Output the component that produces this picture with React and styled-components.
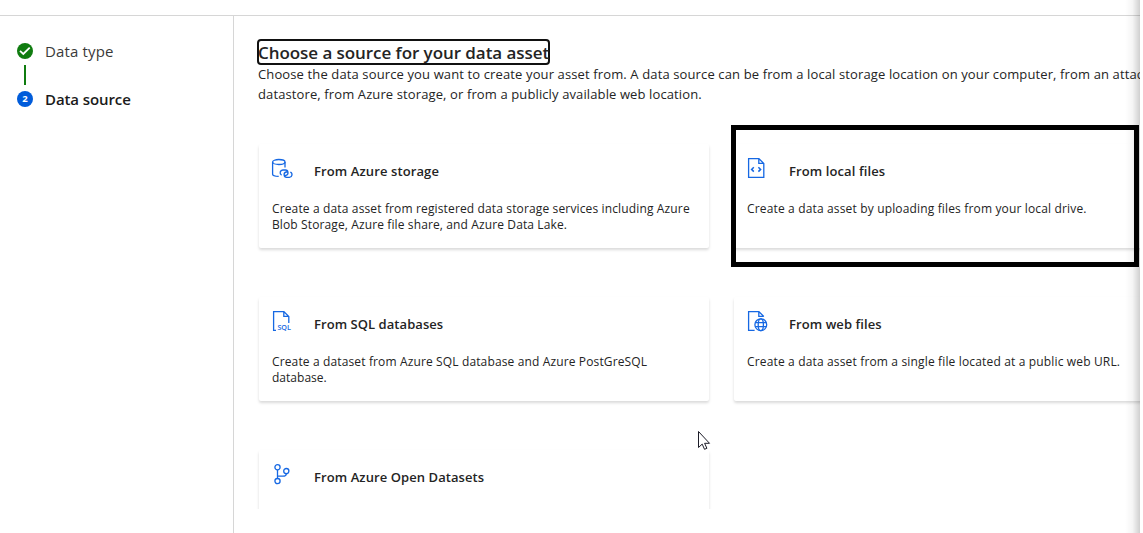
import React from 'react';
import styled, { createGlobalStyle } from 'styled-components';

const Global = createGlobalStyle`
  * { box-sizing: border-box; }
  body { margin: 0; background: #fff; overflow: hidden; }
`;

const Page = styled.div`
  position: relative;
  display: flex;
  flex-direction: column;
  width: 1143px;
  height: 533px;
  padding-right: 3px;
  overflow: hidden;
  background: #fff;
  color: #242424;
  font-family: 'Open Sans', 'Noto Sans', sans-serif;
`;

const TopBar = styled.header`
  flex: none;
  height: 16px;
  border-bottom: 1px solid #d6d6d6;
`;

const Body = styled.div`
  flex: 1;
  display: flex;
  min-height: 0;
`;

const Sidebar = styled.nav`
  flex: none;
  width: 234px;
  padding: 24px 0 0 17px;
  border-right: 1px solid #d6d6d6;
`;

const Step = styled.div`
  display: flex;
  align-items: center;
  gap: 12px;
  height: 22px;
`;

const StepBadge = styled.span`
  display: flex;
  align-items: center;
  justify-content: center;
  width: 16px;
  height: 16px;
  border-radius: 50%;
  background: ${(p) => (p.$done ? '#107c10' : '#015cda')};
  color: #fff;
  font-size: 9.5px;
  font-weight: 700;
  line-height: 16px;
`;

const Connector = styled.div`
  width: 2px;
  height: 20px;
  margin: 3px 0 3px 7px;
  background: #107c10;
`;

const Line = styled.span`
  display: block;
  white-space: nowrap;
  letter-spacing: ${(p) => p.$track || 0}px;
`;

const StepLabel = styled(Line)`
  font-size: 15px;
  line-height: 22px;
  font-weight: ${(p) => (p.$active ? 600 : 400)};
  color: ${(p) => (p.$active ? '#1b1b1b' : '#3a3a3a')};
`;

const Main = styled.main`
  flex: 1;
  min-width: 0;
  height: 493px;
  padding: 23px 0 0 23px;
  overflow: hidden;
`;

const Title = styled.h1`
  width: 293px;
  height: 26px;
  margin: 0;
  padding: 0;
  border: 2px solid #111;
  border-radius: 4px;
  font-size: 17px;
  font-weight: 600;
  line-height: 23px;
  text-indent: -1px;
`;

const Intro = styled.div`
  padding-left: 1px;
  margin-top: -1px;
  font-size: 13px;
  line-height: 20px;
`;

const Grid = styled.div`
  display: grid;
  grid-template-columns: 450px 450px;
  grid-auto-rows: 104px;
  gap: 49px 25px;
  padding: 40px 0 0 2px;
`;

const Card = styled.section`
  padding: 14px 13px;
  background: #fff;
  border-radius: 2px;
  box-shadow: 0 2px 3px rgba(0, 0, 0, 0.15);
`;

const CardHead = styled.div`
  display: flex;
  gap: 20px;
  height: 43px;
`;

const CardIcon = styled.svg`
  flex: none;
  width: 22px;
  height: 22px;
  overflow: visible;
  fill: none;
  stroke: #1668e3;
  stroke-width: 1.3;
`;

const CardTitle = styled(Line)`
  font-size: 13px;
  font-weight: 600;
  line-height: 26px;
`;

const CardText = styled.div`
  font-size: 12px;
  line-height: 16px;
`;

const EdgeShadow = styled.div`
  position: absolute;
  top: 0;
  right: 3px;
  width: 15px;
  height: 533px;
  background: linear-gradient(to right, rgba(0, 0, 0, 0), rgba(0, 0, 0, 0.04) 50%, rgba(0, 0, 0, 0.19));
`;

const Highlight = styled.div`
  position: absolute;
  left: 731px;
  top: 125px;
  width: 408px;
  height: 142px;
  border: 5px solid #000;
`;

const Cursor = styled.svg`
  position: absolute;
  left: 698px;
  top: 430px;
`;

const StorageIcon = () => (
  <CardIcon viewBox="0 0 22 22">
    <ellipse cx="6.8" cy="4" rx="6.2" ry="2.5" />
    <path d="M.6 4v12.2c0 1.2 2.4 2.1 6.1 2.2M13 4v5.6" />
    <path d="M9.6 17.1a2.7 2.7 0 0 1 1.3-5.1h2.6a2.7 2.7 0 0 1 .5 5.3h-1.2M18.3 14.1a2.7 2.7 0 0 1-.9 5.2h-2.8a2.7 2.7 0 0 1-.5-5.3h1.2" />
  </CardIcon>
);

const CodeFileIcon = () => (
  <CardIcon viewBox="0 0 22 22">
    <path d="M1.6.6h10.3l4.9 4.9v13.9H1.6zM11.8.6v4.8h4.8" />
    <path d="M6.8 9.2 4.6 11.4l2.2 2.2M11.4 9.2l2.2 2.2-2.2 2.2" strokeWidth="1.5" />
  </CardIcon>
);

const SqlFileIcon = () => (
  <CardIcon viewBox="0 0 22 22">
    <path d="M4 19.3H1.6V.6h10.3l4.9 4.9v6.6M11.8.6v4.8h4.8" />
    <text x="5.4" y="19.4" fontSize="7.2" fontWeight="600" fill="#1668e3" stroke="none" textLength="13.4">SQL</text>
  </CardIcon>
);

const WebFileIcon = () => (
  <CardIcon viewBox="0 0 22 22">
    <path d="M7.6 19.3h-6V.6h10.3l4.9 4.9M11.8.6v4.8h5" />
    <circle cx="13.8" cy="13.7" r="5.9" />
    <ellipse cx="13.8" cy="13.7" rx="2.6" ry="5.9" />
    <path d="M8.3 11.6h11M8.3 15.6h11" />
  </CardIcon>
);

const BranchIcon = () => (
  <CardIcon viewBox="0 0 22 22">
    <circle cx="5.5" cy="3.3" r="2.6" />
    <circle cx="14.3" cy="7.1" r="2.6" />
    <circle cx="5.5" cy="17.1" r="2.6" />
    <path d="M5.5 5.9v8.6M5.5 12.2h5.4c2.3 0 3.4-.7 3.4-2.5" />
  </CardIcon>
);

const sources = [
  { title: ['From Azure storage', 0.11], Icon: StorageIcon, text: [
    ['Create a data asset from registered data storage services including Azure', 0.14],
    ['Blob Storage, Azure file share, and Azure Data Lake.', 0.12]] },
  { title: ['From local files', 0.1], Icon: CodeFileIcon, text: [
    ['Create a data asset by uploading files from your local drive.', 0.155]] },
  { title: ['From SQL databases', 0.06], Icon: SqlFileIcon, text: [
    ['Create a dataset from Azure SQL database and Azure PostGreSQL', 0.135],
    ['database.', 0.02]] },
  { title: ['From web files', 0.08], Icon: WebFileIcon, text: [
    ['Create a data asset from a single file located at a public web URL.', 0.155]] },
  { title: ['From Azure Open Datasets', 0.08], Icon: BranchIcon, text: [] },
];

export default function App() {
  return (
    <Page>
      <Global />
      <TopBar />
      <Body>
        <Sidebar>
          <Step>
            <StepBadge $done>
              <svg width="16" height="16" viewBox="0 0 16 16" fill="none" stroke="#fff" strokeWidth="1.8">
                <path d="M3 7.8 6.3 10.9l6.4-6.3" />
              </svg>
            </StepBadge>
            <StepLabel $track={0.16}>Data type</StepLabel>
          </Step>
          <Connector />
          <Step>
            <StepBadge>2</StepBadge>
            <StepLabel $active $track={-0.1}>Data source</StepLabel>
          </Step>
        </Sidebar>
        <Main>
          <Title><Line $track={-0.06}>Choose a source for your data asset</Line></Title>
          <Intro>
            <Line $track={0.125}>Choose the data source you want to create your asset from. A data source can be from a local storage location on your computer, from an attached</Line>
            <Line $track={0.115}>datastore, from Azure storage, or from a publicly available web location.</Line>
          </Intro>
          <Grid>
            {sources.map(({ title, Icon, text }) => (
              <Card key={title[0]}>
                <CardHead>
                  <Icon />
                  <CardTitle $track={title[1]}>{title[0]}</CardTitle>
                </CardHead>
                <CardText>
                  {text.map(([t, track]) => <Line key={t} $track={track}>{t}</Line>)}
                </CardText>
              </Card>
            ))}
          </Grid>
        </Main>
      </Body>
      <EdgeShadow />
      <Highlight />
      <Cursor width="13" height="21" viewBox="0 0 13 21" fill="#fff" stroke="#1c1c28" strokeWidth="1">
        <path d="M.5 1.5v16l3.7-3.4 2.3 5.2 2.4-1-2.3-5h4.9z" />
      </Cursor>
    </Page>
  );
}
